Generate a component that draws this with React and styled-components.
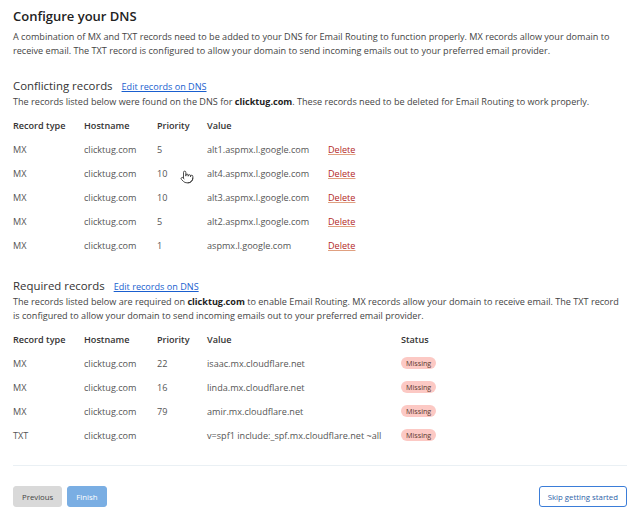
import React from "react";
import styled, { createGlobalStyle } from "styled-components";
import { Pointer } from "lucide-react";

const GlobalStyle = createGlobalStyle`
  body {
    margin: 0;
    background: #fff;
    font-family: "Open Sans", "Noto Sans", sans-serif;
    color: #333;
  }
`;

const conflicting = [
  { type: "MX", host: "clicktug.com", priority: "5", value: "alt1.aspmx.l.google.com" },
  { type: "MX", host: "clicktug.com", priority: "10", value: "alt4.aspmx.l.google.com" },
  { type: "MX", host: "clicktug.com", priority: "10", value: "alt3.aspmx.l.google.com" },
  { type: "MX", host: "clicktug.com", priority: "5", value: "alt2.aspmx.l.google.com" },
  { type: "MX", host: "clicktug.com", priority: "1", value: "aspmx.l.google.com" },
];

const required = [
  { type: "MX", host: "clicktug.com", priority: "22", value: "isaac.mx.cloudflare.net" },
  { type: "MX", host: "clicktug.com", priority: "16", value: "linda.mx.cloudflare.net" },
  { type: "MX", host: "clicktug.com", priority: "79", value: "amir.mx.cloudflare.net" },
  { type: "TXT", host: "clicktug.com", priority: "", value: "v=spf1 include:_spf.mx.cloudflare.net ~all" },
];

const App = () => {
  return (
    <Page>
      <GlobalStyle />
      <Title>Configure your DNS</Title>
      <Para>
        A combination of MX and TXT records need to be added to your DNS for Email Routing to function properly. MX records allow your domain to receive email. The TXT record is configured to allow your domain to send incoming emails out to your preferred email provider.
      </Para>

      <Section $top={20}>
        <SectionHead>
          <SubTitle>Conflicting records</SubTitle>
          <EditLink href="#">Edit records on DNS</EditLink>
        </SectionHead>
        <Para>
          The records listed below were found on the DNS for <b>clicktug.com</b>. These records need to be deleted for Email Routing to work properly.
        </Para>
        <Table $valueWidth={121}>
          <HeadCell>Record type</HeadCell>
          <HeadCell>Hostname</HeadCell>
          <HeadCell>Priority</HeadCell>
          <HeadCell>Value</HeadCell>
          <HeadCell />
          {conflicting.map((r, i) => (
            <React.Fragment key={i}>
              <Cell>{r.type}</Cell>
              <Cell>{r.host}</Cell>
              <Cell>{r.priority}</Cell>
              <Cell>{r.value}</Cell>
              <Cell><DeleteLink href="#">Delete</DeleteLink></Cell>
            </React.Fragment>
          ))}
        </Table>
        <Cursor><Pointer size={14} strokeWidth={1.5} /></Cursor>
      </Section>

      <Section $top={21}>
        <SectionHead>
          <SubTitle>Required records</SubTitle>
          <EditLink href="#">Edit records on DNS</EditLink>
        </SectionHead>
        <Para>
          The records listed below are required on <b>clicktug.com</b> to enable Email Routing. MX records allow your domain to receive email. The TXT record is configured to allow your domain to send incoming emails out to your preferred email provider.
        </Para>
        <Table $valueWidth={194}>
          <HeadCell>Record type</HeadCell>
          <HeadCell>Hostname</HeadCell>
          <HeadCell>Priority</HeadCell>
          <HeadCell>Value</HeadCell>
          <HeadCell>Status</HeadCell>
          {required.map((r, i) => (
            <React.Fragment key={i}>
              <Cell>{r.type}</Cell>
              <Cell>{r.host}</Cell>
              <Cell>{r.priority}</Cell>
              <Cell>{r.value}</Cell>
              <Cell><Badge>Missing</Badge></Cell>
            </React.Fragment>
          ))}
        </Table>
      </Section>

      <Divider />

      <Footer>
        <ButtonGroup>
          <Button $variant="grey">Previous</Button>
          <Button $variant="primary">Finish</Button>
        </ButtonGroup>
        <Button $variant="outline">Skip getting started</Button>
      </Footer>
    </Page>
  );
};

export default App;

const Page = styled.div`
  width: 614px;
  padding: 7px 13px 0 13px;
`;

const Title = styled.h2`
  margin: 0 0 5px 0;
  font-size: 13px;
  font-weight: 600;
  color: #222;
  line-height: 18px;
`;

const Para = styled.p`
  margin: 0;
  font-size: 9.1px;
  line-height: 14px;
  color: #444;

  b {
    font-weight: 700;
    color: #222;
  }
`;

const Section = styled.div`
  position: relative;
  margin-top: ${(p) => p.$top}px;
`;

const SectionHead = styled.div`
  display: flex;
  align-items: baseline;
  gap: 9px;
  margin-bottom: 1px;
`;

const SubTitle = styled.h3`
  margin: 0;
  font-size: 11.4px;
  font-weight: 400;
  color: #333;
  line-height: 16px;
`;

const EditLink = styled.a`
  font-size: 9.1px;
  color: #1a5fcf;
  text-decoration: underline;
`;

const Table = styled.div`
  display: grid;
  grid-template-columns: 71px 73px 50px ${(p) => p.$valueWidth}px 1fr;
  grid-auto-rows: 24px;
  margin-top: 4px;
`;

const HeadCell = styled.div`
  display: flex;
  align-items: center;
  font-size: 9.1px;
  font-weight: 600;
  color: #333;
`;

const Cell = styled.div`
  display: flex;
  align-items: center;
  font-size: 9.1px;
  color: #555;
  white-space: nowrap;
`;

const DeleteLink = styled.a`
  color: #b3261e;
  text-decoration: underline;
  text-decoration-color: #e0a080;
`;

const Badge = styled.span`
  display: inline-block;
  background: #fcc9c4;
  color: #5a3a30;
  font-size: 7.2px;
  line-height: 12px;
  padding: 0 5px;
  border-radius: 6px;
`;

const Cursor = styled.div`
  position: absolute;
  left: 167px;
  top: 89px;
  color: #333;
`;

const Divider = styled.hr`
  margin: 18px 0 0 0;
  border: none;
  border-top: 1px solid #eaf0f4;
`;

const Footer = styled.div`
  display: flex;
  justify-content: space-between;
  margin-top: 20px;
`;

const ButtonGroup = styled.div`
  display: flex;
  gap: 5px;
`;

const Button = styled.button`
  height: 21px;
  padding: 0 8px;
  font-family: "Open Sans", "Noto Sans", sans-serif;
  font-size: 7.8px;
  border-radius: 3px;
  cursor: pointer;
  border: 1px solid
    ${(p) => (p.$variant === "outline" ? "#3b7dd8" : p.$variant === "primary" ? "#7aaee3" : "#d9d9d9")};
  background: ${(p) => (p.$variant === "primary" ? "#7aaee3" : p.$variant === "grey" ? "#d9d9d9" : "#fff")};
  color: ${(p) => (p.$variant === "primary" ? "#fff" : p.$variant === "outline" ? "#2d5fa8" : "#444")};
`;
